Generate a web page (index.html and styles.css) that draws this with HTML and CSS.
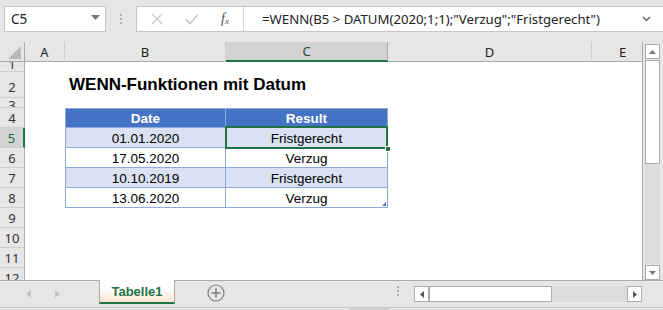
FILE: index.html
```html
<!DOCTYPE html>
<html lang="de">
<head>
<meta charset="utf-8">
<title>Excel – WENN mit Datum</title>
<link rel="stylesheet" href="styles.css">
</head>
<body>
<div class="app">
  <div class="fbar">
    <div class="namebox">
      <span class="nb-text">C5</span>
      <svg class="nb-arrow" width="9" height="5" viewBox="0 0 9 5"><path d="M0 0h9L4.5 5z" fill="#7a7a7a"/></svg>
    </div>
    <div class="grip"><i></i><i></i><i></i></div>
    <div class="formula">
      <div class="fx-tools">
        <svg width="12" height="12" viewBox="0 0 12 12"><path d="M1 1l10 10M11 1L1 11" stroke="#c8c8c8" stroke-width="1.4" fill="none"/></svg>
        <svg width="14" height="12" viewBox="0 0 14 12"><path d="M1 6.5l4 4L13 1.5" stroke="#c8c8c8" stroke-width="1.6" fill="none"/></svg>
        <span class="fx">f<sub>x</sub></span>
      </div>
      <div class="ftext">=WENN(B5 &gt; DATUM(2020;1;1);"Verzug";"Fristgerecht")</div>
      <svg class="fchev" width="9" height="6" viewBox="0 0 9 6"><path d="M1 1l3.5 3.5L8 1" stroke="#6a6a6a" stroke-width="1.5" fill="none"/></svg>
    </div>
  </div>

  <div class="main">
    <div class="sheet">
      <div class="grid">
        <div class="corner"><span class="tri"></span></div>
        <div class="ch">A</div>
        <div class="ch">B</div>
        <div class="ch sel">C</div>
        <div class="ch">D</div>
        <div class="ch ch-e">E</div>

        <div class="rh r1">1</div><div class="c r1"></div><div class="c r1"></div><div class="c r1"></div><div class="c r1"></div><div class="c r1"></div>

        <div class="rh r2">2</div><div class="c r2"></div><div class="c r2 title-cell"><span class="title">WENN-Funktionen mit Datum</span></div><div class="c r2"></div><div class="c r2"></div><div class="c r2"></div>

        <div class="rh r3">3</div><div class="c r3"></div><div class="c r3"></div><div class="c r3"></div><div class="c r3"></div><div class="c r3"></div>

        <div class="rh">4</div><div class="c"></div><div class="c t th tl">Date</div><div class="c t th">Result</div><div class="c"></div><div class="c"></div>

        <div class="rh rsel">5</div><div class="c"></div><div class="c t tl band">01.01.2020</div><div class="c t band active">Fristgerecht<span class="selbox"><span class="handle"></span></span></div><div class="c"></div><div class="c"></div>

        <div class="rh">6</div><div class="c"></div><div class="c t tl">17.05.2020</div><div class="c t">Verzug</div><div class="c"></div><div class="c"></div>

        <div class="rh">7</div><div class="c"></div><div class="c t tl band">10.10.2019</div><div class="c t band">Fristgerecht</div><div class="c"></div><div class="c"></div>

        <div class="rh">8</div><div class="c"></div><div class="c t tl">13.06.2020</div><div class="c t last">Verzug<span class="resize"></span></div><div class="c"></div><div class="c"></div>

        <div class="rh">9</div><div class="c"></div><div class="c"></div><div class="c"></div><div class="c"></div><div class="c"></div>
        <div class="rh">10</div><div class="c"></div><div class="c"></div><div class="c"></div><div class="c"></div><div class="c"></div>
        <div class="rh">11</div><div class="c"></div><div class="c"></div><div class="c"></div><div class="c"></div><div class="c"></div>
        <div class="rh">12</div><div class="c"></div><div class="c"></div><div class="c"></div><div class="c"></div><div class="c"></div>
      </div>
    </div>
    <div class="vscroll">
      <div class="sbtn"><svg width="7" height="4" viewBox="0 0 7 4"><path d="M0 4h7L3.5 0z" fill="#7a7a7a"/></svg></div>
      <div class="vthumb"></div>
      <div class="vtrack"></div>
      <div class="sbtn"><svg width="7" height="4" viewBox="0 0 7 4"><path d="M0 0h7L3.5 4z" fill="#7a7a7a"/></svg></div>
    </div>
  </div>

  <div class="tabbar">
    <div class="navs">
      <svg width="5" height="8" viewBox="0 0 5 8"><path d="M5 0v8L0 4z" fill="#c6c6c6"/></svg>
      <svg width="5" height="8" viewBox="0 0 5 8"><path d="M0 0v8l5-4z" fill="#c6c6c6"/></svg>
    </div>
    <div class="tab">Tabelle1</div>
    <div class="addtab">
      <svg width="18" height="18" viewBox="0 0 18 18"><circle cx="9" cy="9" r="8" fill="none" stroke="#808080" stroke-width="1.2"/><path d="M9 4.5v9M4.5 9h9" stroke="#808080" stroke-width="1.6"/></svg>
    </div>
    <div class="hgrip"><i></i><i></i><i></i></div>
    <div class="hscroll">
      <div class="hbtn"><svg width="4" height="7" viewBox="0 0 4 7"><path d="M4 0v7L0 3.5z" fill="#555"/></svg></div>
      <div class="hthumb"></div>
      <div class="htrack"></div>
      <div class="hbtn"><svg width="4" height="7" viewBox="0 0 4 7"><path d="M0 0v7l4-3.5z" fill="#555"/></svg></div>
    </div>
  </div>
  <div class="status"><span class="stat-mark"></span></div>
</div>
</body>
</html>
```

FILE: styles.css
```css
* { box-sizing: border-box; }
html, body { margin: 0; padding: 0; }
body {
  width: 663px;
  height: 310px;
  overflow: hidden;
  background: #e6e6e6;
  font-family: "Liberation Sans", Arial, sans-serif;
}
.app { width: 663px; height: 310px; display: flex; flex-direction: column; }

/* formula bar */
.fbar {
  height: 42px;
  display: flex;
  align-items: flex-start;
  padding: 6px 0 0 4px;
  background: #e6e6e6;
}
.namebox {
  width: 102px;
  height: 26px;
  background: #fff;
  border: 1px solid #c6c6c6;
  display: flex;
  align-items: center;
  justify-content: space-between;
  padding: 0 5px 0 6px;
}
.nb-text { font-family: "Noto Sans", "Open Sans", sans-serif; font-size: 13.5px; color: #222; }
.nb-arrow { margin-top: -4px; }
.grip { width: 30px; height: 26px; display: flex; flex-direction: column; align-items: center; justify-content: center; gap: 2px; }
.grip i, .hgrip i { display: block; width: 2px; height: 2px; background: #b0b0b0; }
.formula {
  flex: 1;
  height: 26px;
  background: #fff;
  border: 1px solid #c6c6c6;
  border-right: none;
  display: flex;
  align-items: center;
}
.fx-tools {
  width: 107px;
  height: 24px;
  display: flex;
  align-items: center;
  padding-left: 14px;
  border-right: 1px solid #d4d4d4;
}
.fx-tools svg:first-child { margin-right: 22px; }
.fx-tools svg:nth-child(2) { margin-right: 22px; }
.fx { font-family: "Liberation Serif", serif; font-style: italic; font-size: 14px; color: #505050; }
.fx sub { font-size: 9px; vertical-align: -1px; }
.ftext {
  flex: 1;
  padding-left: 18px;
  font-family: "Noto Sans", "Open Sans", sans-serif;
  font-size: 13.2px;
  color: #222;
  white-space: nowrap;
}
.fchev { margin-right: 12px; }

/* sheet */
.main { height: 238px; display: flex; background: #e6e6e6; }
.sheet {
  width: 643px;
  height: 238px;
  overflow: hidden;
  border-right: 1px solid #ababab;
  background: #fff;
}
.grid {
  display: grid;
  grid-template-columns: 25px 40px 161px 162px 204px 50px;
  grid-template-rows: 20px 10px 26px 10px repeat(9, 20px);
}
.corner {
  background: #e6e6e6;
  border-right: 1px solid #ababab;
  border-bottom: 1px solid #ababab;
  position: relative;
}
.tri {
  position: absolute;
  right: 3px;
  bottom: 2px;
  width: 0; height: 0;
  border-left: 13px solid transparent;
  border-bottom: 13px solid #b8b8b8;
}
.ch {
  background: #e6e6e6;
  border-right: 1px solid #cfcfcf;
  border-bottom: 1px solid #ababab;
  display: flex;
  align-items: center;
  justify-content: center;
  font-family: "Noto Sans", "Open Sans", sans-serif;
  font-size: 13px;
  color: #222;
}
.ch-e { border-right: none; justify-content: flex-start; padding-left: 27px; }
.ch.sel { background: #d2d2d2; border-bottom: 2px solid #217346; border-right-color: #ababab; color: #1f4d33; }

.rh {
  background: #e6e6e6;
  border-right: 1px solid #ababab;
  border-bottom: 1px solid #cfcfcf;
  display: flex;
  align-items: center;
  justify-content: center;
  font-family: "Noto Sans", "Open Sans", sans-serif;
  font-size: 13px;
  color: #333;
  overflow: hidden;
}
.rh.r1 { align-items: flex-end; line-height: 14px; }
.rh.r3 { align-items: flex-start; line-height: 14px; }
.rh.r2 { align-items: flex-end; padding-bottom: 1px; }
.rh.rsel { background: #d2d2d2; border-right: 2px solid #217346; color: #1f6b45; }

.c {
  background: #fff;
  display: flex;
  align-items: center;
  justify-content: center;
  font-size: 13.5px;
  color: #000;
  white-space: nowrap;
  position: relative;
}
.title-cell { justify-content: flex-start; overflow: visible; align-items: flex-end; padding: 0 0 3px 4px; z-index: 2; }
.title { font-weight: bold; font-size: 17px; color: #000; }

.t {
  border-right: 1px solid #8ea9db;
  border-bottom: 1px solid #8ea9db;
  padding-top: 1px;
}
.tl { border-left: 1px solid #8ea9db; }
.th { background: #4472c4; color: #fff; font-weight: bold; border-top: 1px solid #8ea9db; }
.band { background: #d9e1f2; }

.active { z-index: 1; }
.selbox {
  position: absolute;
  left: -1px;
  top: -2px;
  right: -1px;
  bottom: -2px;
  border: 2px solid #217346;
}
.handle {
  position: absolute;
  right: -5px;
  bottom: -5px;
  width: 6px;
  height: 6px;
  background: #217346;
  border: 1px solid #fff;
}
.resize {
  position: absolute;
  right: 1px;
  bottom: 1px;
  width: 0; height: 0;
  border-left: 4px solid transparent;
  border-bottom: 4px solid #4472c4;
}

/* vertical scrollbar */
.vscroll {
  width: 15px;
  margin-left: 2px;
  padding-top: 2px;
  display: flex;
  flex-direction: column;
}
.sbtn {
  height: 15px;
  background: #fff;
  border: 1px solid #ababab;
  display: flex;
  align-items: center;
  justify-content: center;
}
.vthumb { height: 104px; background: #fff; border: 1px solid #ababab; margin-top: 1px; }
.vtrack { flex: 1; background: #dcdcdc; margin-bottom: 1px; }

/* tab bar */
.tabbar {
  height: 27px;
  border-top: 1px solid #ababab;
  display: flex;
  align-items: flex-start;
  background: #e6e6e6;
}
.navs { width: 99px; display: flex; gap: 24px; padding: 9px 0 0 26px; }
.tab {
  width: 76px;
  height: 24px;
  margin-top: -1px;
  background: linear-gradient(#ffffff 40%, #fbe3d3);
  border-left: 1px solid #ababab;
  border-right: 1px solid #ababab;
  border-bottom: 2px solid #217346;
  display: flex;
  align-items: center;
  justify-content: center;
  font-size: 13px;
  font-weight: bold;
  color: #217346;
}
.addtab { width: 60px; padding: 3px 0 0 32px; }
.hgrip { width: 16px; height: 26px; display: flex; flex-direction: column; align-items: center; padding-top: 5px; gap: 2px; margin-left: 155px; }
.hscroll {
  margin-left: 8px;
  margin-top: 5px;
  width: 228px;
  height: 16px;
  display: flex;
}
.hbtn {
  width: 15px;
  height: 16px;
  background: #fff;
  border: 1px solid #ababab;
  display: flex;
  align-items: center;
  justify-content: center;
}
.hthumb { width: 123px; background: #fff; border: 1px solid #ababab; }
.htrack { flex: 1; background: #dcdcdc; }

.status { height: 3px; border-top: 1px solid #c6c6c6; position: relative; }
.stat-mark { position: absolute; left: 349px; top: 0; width: 40px; height: 3px; background: #d0d0d0; }
```
